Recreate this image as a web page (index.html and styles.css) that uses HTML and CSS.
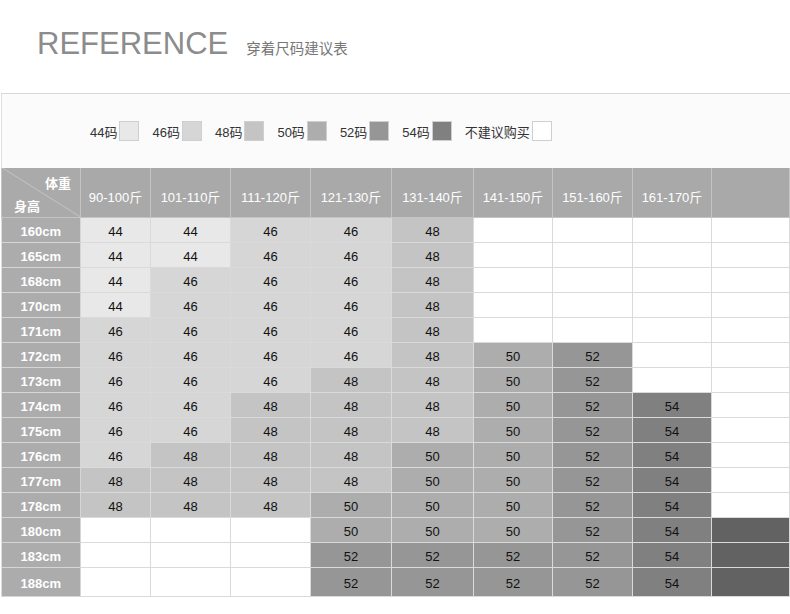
FILE: index.html
```html
<!DOCTYPE html>
<html lang="zh-CN">
<head>
<meta charset="utf-8">
<title>REFERENCE 穿着尺码建议表</title>
<link rel="stylesheet" href="styles.css">
</head>
<body>
<header class="title-bar">
  <h1 class="title">REFERENCE</h1>
  <span class="subtitle">穿着尺码建议表</span>
</header>
<section class="sheet">
  <div class="legend">
    <div class="legend-item"><span>44码</span><i class="swatch s44"></i></div>
    <div class="legend-item"><span>46码</span><i class="swatch s46"></i></div>
    <div class="legend-item"><span>48码</span><i class="swatch s48"></i></div>
    <div class="legend-item"><span>50码</span><i class="swatch s50"></i></div>
    <div class="legend-item"><span>52码</span><i class="swatch s52"></i></div>
    <div class="legend-item"><span>54码</span><i class="swatch s54"></i></div>
    <div class="legend-item"><span>不建议购买</span><i class="swatch e"></i></div>
  </div>
  <table class="size-table">
    <colgroup>
      <col class="c-h"><col class="c1"><col class="c2"><col class="c3"><col class="c4"><col class="c5"><col class="c6"><col class="c7"><col class="c8"><col class="c9">
    </colgroup>
    <thead>
      <tr>
        <th class="corner"><span class="w">体重</span><span class="hgt">身高</span></th>
        <th>90-100斤</th><th>101-110斤</th><th>111-120斤</th><th>121-130斤</th><th>131-140斤</th><th>141-150斤</th><th>151-160斤</th><th>161-170斤</th><th></th>
      </tr>
    </thead>
    <tbody>
      <tr><th>160cm</th><td class="s44">44</td><td class="s44">44</td><td class="s46">46</td><td class="s46">46</td><td class="s48">48</td><td class="e"></td><td class="e"></td><td class="e"></td><td class="e"></td></tr>
      <tr><th>165cm</th><td class="s44">44</td><td class="s44">44</td><td class="s46">46</td><td class="s46">46</td><td class="s48">48</td><td class="e"></td><td class="e"></td><td class="e"></td><td class="e"></td></tr>
      <tr><th>168cm</th><td class="s44">44</td><td class="s46">46</td><td class="s46">46</td><td class="s46">46</td><td class="s48">48</td><td class="e"></td><td class="e"></td><td class="e"></td><td class="e"></td></tr>
      <tr><th>170cm</th><td class="s44">44</td><td class="s46">46</td><td class="s46">46</td><td class="s46">46</td><td class="s48">48</td><td class="e"></td><td class="e"></td><td class="e"></td><td class="e"></td></tr>
      <tr><th>171cm</th><td class="s46">46</td><td class="s46">46</td><td class="s46">46</td><td class="s46">46</td><td class="s48">48</td><td class="e"></td><td class="e"></td><td class="e"></td><td class="e"></td></tr>
      <tr><th>172cm</th><td class="s46">46</td><td class="s46">46</td><td class="s46">46</td><td class="s46">46</td><td class="s48">48</td><td class="s50">50</td><td class="s52">52</td><td class="e"></td><td class="e"></td></tr>
      <tr><th>173cm</th><td class="s46">46</td><td class="s46">46</td><td class="s46">46</td><td class="s48">48</td><td class="s48">48</td><td class="s50">50</td><td class="s52">52</td><td class="e"></td><td class="e"></td></tr>
      <tr><th>174cm</th><td class="s46">46</td><td class="s46">46</td><td class="s48">48</td><td class="s48">48</td><td class="s48">48</td><td class="s50">50</td><td class="s52">52</td><td class="s54">54</td><td class="e"></td></tr>
      <tr><th>175cm</th><td class="s46">46</td><td class="s46">46</td><td class="s48">48</td><td class="s48">48</td><td class="s48">48</td><td class="s50">50</td><td class="s52">52</td><td class="s54">54</td><td class="e"></td></tr>
      <tr><th>176cm</th><td class="s46">46</td><td class="s48">48</td><td class="s48">48</td><td class="s48">48</td><td class="s50">50</td><td class="s50">50</td><td class="s52">52</td><td class="s54">54</td><td class="e"></td></tr>
      <tr><th>177cm</th><td class="s48">48</td><td class="s48">48</td><td class="s48">48</td><td class="s48">48</td><td class="s50">50</td><td class="s50">50</td><td class="s52">52</td><td class="s54">54</td><td class="e"></td></tr>
      <tr><th>178cm</th><td class="s48">48</td><td class="s48">48</td><td class="s48">48</td><td class="s50">50</td><td class="s50">50</td><td class="s50">50</td><td class="s52">52</td><td class="s54">54</td><td class="e"></td></tr>
      <tr><th>180cm</th><td class="e"></td><td class="e"></td><td class="e"></td><td class="s50">50</td><td class="s50">50</td><td class="s50">50</td><td class="s52">52</td><td class="s54">54</td><td class="sx"></td></tr>
      <tr><th>183cm</th><td class="e"></td><td class="e"></td><td class="e"></td><td class="s52">52</td><td class="s52">52</td><td class="s52">52</td><td class="s52">52</td><td class="s54">54</td><td class="sx"></td></tr>
      <tr class="last"><th>188cm</th><td class="e"></td><td class="e"></td><td class="e"></td><td class="s52">52</td><td class="s52">52</td><td class="s52">52</td><td class="s52">52</td><td class="s54">54</td><td class="sx"></td></tr>
    </tbody>
  </table>
</section>
</body>
</html>
```

FILE: styles.css
```css
* { box-sizing: border-box; }

html, body {
  margin: 0;
  padding: 0;
  background: #ffffff;
}

body {
  font-family: "Liberation Sans", Arial, "Noto Sans CJK SC", sans-serif;
  color: #222;
}

.title-bar {
  height: 93px;
  padding: 28px 0 0 37px;
  display: flex;
  align-items: baseline;
}

.title {
  margin: 0;
  font-size: 31px;
  line-height: 1;
  font-weight: normal;
  color: #8c8c8c;
  letter-spacing: 0;
}

.subtitle {
  margin-left: 18px;
  font-size: 14.5px;
  color: #777777;
  font-family: "Noto Sans CJK SC", sans-serif;
}

.sheet {
  width: 789px;
  margin-left: 1px;
  border-top: 1px solid #d8d8d8;
  border-left: 1px solid #dddddd;
  background: #fbfbfb;
}

.legend {
  height: 74px;
  display: flex;
  align-items: center;
  padding: 0 0 0 88px;
}

.legend-item {
  display: flex;
  align-items: center;
  margin-right: 13px;
  font-size: 13px;
  color: #333;
}

.swatch {
  display: block;
  width: 20px;
  height: 20px;
  margin-left: 2px;
  border: 1px solid #cfcfcf;
}

.size-table {
  width: 788px;
  table-layout: fixed;
  border-collapse: collapse;
  font-size: 13px;
  margin-left: -1px;
}

.c-h { width: 79px; }
.c1 { width: 70px; }
.c2 { width: 80px; }
.c3 { width: 80px; }
.c4 { width: 81px; }
.c5 { width: 82px; }
.c6 { width: 79px; }
.c7 { width: 80px; }
.c8 { width: 79px; }
.c9 { width: 78px; }

.size-table thead th {
  height: 49px;
  padding: 9px 0 0;
  background: #a9a9a9;
  color: #ffffff;
  font-weight: normal;
  text-align: center;
  border: 1px solid #c4c4c4;
  border-top: none;
  white-space: nowrap;
}

.size-table thead th.corner {
  position: relative;
  padding: 0;
  background: linear-gradient(to top right, #aaaaaa calc(50% - 0.6px), #cdcdcd 50%, #aaaaaa calc(50% + 0.6px));
}

.corner .w,
.corner .hgt {
  position: absolute;
  font-weight: bold;
  font-size: 13px;
  line-height: 1;
}

.corner .w { top: 9px; right: 9px; }
.corner .hgt { bottom: 4px; left: 12px; }

.size-table tbody th {
  height: 25px;
  padding: 3px 0 0;
  background: #acacac;
  color: #ffffff;
  font-weight: bold;
  text-align: center;
  border: 1px solid #d6d6d6;
  border-left: none;
}

.size-table td {
  height: 25px;
  padding: 3px 0 0;
  text-align: center;
  color: #111;
  border: 1px solid #dadada;
}

.size-table tr.last th,
.size-table tr.last td {
  height: 29px;
}

.s44 { background: #e8e8e8; }
.s46 { background: #d6d6d6; }
.s48 { background: #c4c4c4; }
.s50 { background: #adadad; }
.s52 { background: #969696; }
.s54 { background: #808080; }
.sx { background: #626262; }
.e { background: #ffffff; }
```
